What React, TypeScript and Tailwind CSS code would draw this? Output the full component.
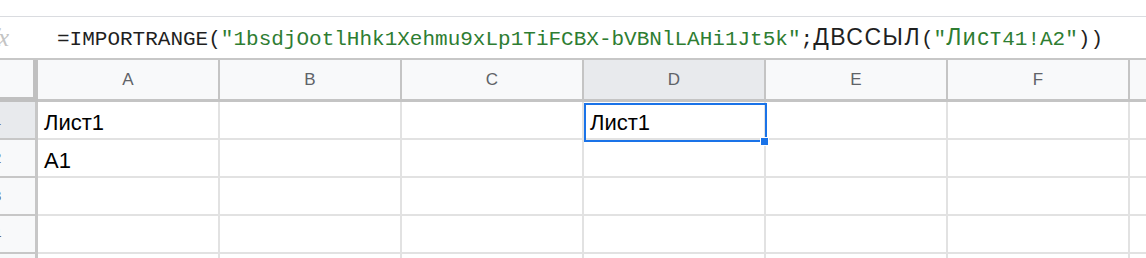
const columns = ["A", "B", "C", "D", "E", "F"];

const rows: { n: number; cells: string[] }[] = [
  { n: 1, cells: ["Лист1", "", "", "Лист1", "", ""] },
  { n: 2, cells: ["A1", "", "", "", "", ""] },
  { n: 3, cells: ["", "", "", "", "", ""] },
  { n: 4, cells: ["", "", "", "", "", ""] },
  { n: 5, cells: ["", "", "", "", "", ""] },
];

const mono = "font-['Liberation_Mono',monospace]";
const sans = "font-['Liberation_Sans',Arial,sans-serif]";

function FormulaBar() {
  return (
    <div className="h-[43px] flex items-center border-b-2 border-[#c7c7c7] bg-white">
      <span className="-ml-[9px] w-[66px] italic font-['Liberation_Serif',serif] text-[25px] text-[#c4c4c4] leading-none">
        fx
      </span>
      <div className={`${mono} text-[21px] leading-none whitespace-nowrap text-[#1f1f1f]`}>
        <span>=IMPORTRANGE(</span>
        <span className="text-[#2e7d32]">"1bsdjOotlHhk1Xehmu9xLp1TiFCBX-bVBNlLAHi1Jt5k"</span>
        <span>;</span>
        <span className={`${sans} text-[23px] tracking-[1.5px]`}>ДВССЫЛ</span>
        <span>(</span>
        <span className="text-[#2e7d32]">
          "<span className={`${sans} text-[23px] tracking-[1.5px]`}>Лист</span>41!A2"
        </span>
        <span>))</span>
      </div>
    </div>
  );
}

function HeaderRow() {
  return (
    <div className="h-[42px] flex">
      <div className="w-[38px] shrink-0 bg-[#f8f9fa] border-r-[5px] border-b-[5px] border-[#c0c0c0]" />
      {columns.map((c) => (
        <div
          key={c}
          className={`w-[182px] shrink-0 flex items-center justify-center border-r-2 border-b-[3px] border-[#c4c4c4] ${sans} text-[17px] text-[#5f6368] ${
            c === "D" ? "bg-[#e8eaed]" : "bg-[#f8f9fa]"
          }`}
        >
          {c}
        </div>
      ))}
      <div className="flex-1 bg-[#f8f9fa] border-b-[3px] border-[#c4c4c4]" />
    </div>
  );
}

function Row({ n, cells }: { n: number; cells: string[] }) {
  return (
    <div className="h-[38px] flex">
      <div
        className={`w-[38px] shrink-0 flex items-center border-r-[3px] border-b-2 border-[#c7c7c7] ${sans} text-[15px] text-[#5f6368] ${
          n === 1 ? "bg-[#e8eaed]" : "bg-[#f8f9fa]"
        }`}
      >
        <span className="-ml-[7px]">{n}</span>
      </div>
      {cells.map((v, i) => (
        <div
          key={i}
          className={`w-[182px] shrink-0 flex items-end pb-[3px] pl-[6px] border-r-2 border-b-2 border-[#e2e2e2] ${sans} text-[22px] leading-[24px] text-black`}
        >
          {v}
        </div>
      ))}
      <div className="flex-1 border-b-2 border-[#e2e2e2]" />
    </div>
  );
}

export default function App() {
  return (
    <div className="w-[1146px] h-[258px] overflow-hidden bg-white relative">
      <div className="h-[17px] border-b border-[#dadce0] bg-white" />
      <FormulaBar />
      <HeaderRow />
      {rows.map((r) => (
        <Row key={r.n} n={r.n} cells={r.cells} />
      ))}
      {/* selection on D1 */}
      <div className="absolute left-[584px] top-[103px] w-[183px] h-[39px] border-2 border-[#1a73e8] pointer-events-none" />
      <div className="absolute left-[760px] top-[137px] w-[9px] h-[9px] bg-[#1a73e8] border border-white" />
    </div>
  );
}
